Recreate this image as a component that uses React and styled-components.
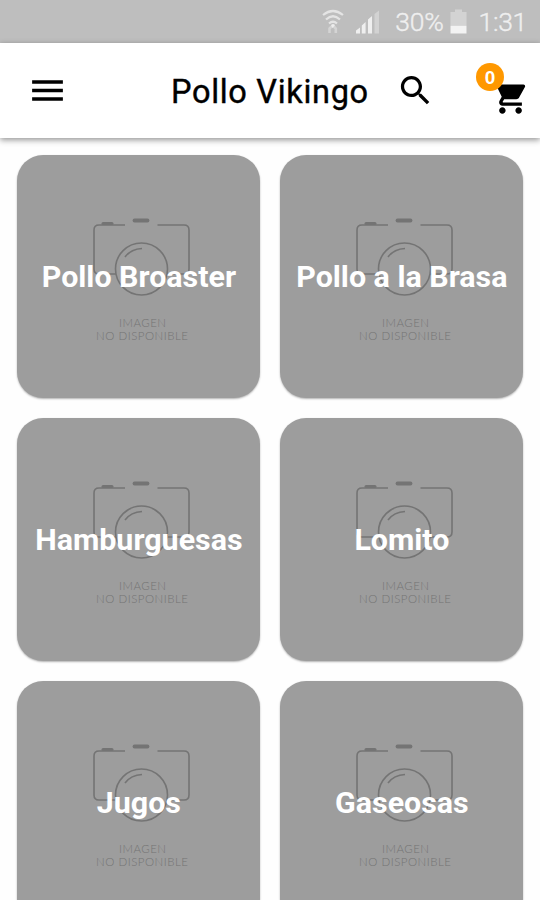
import React from "react";
import styled, { createGlobalStyle } from "styled-components";

const GlobalStyle = createGlobalStyle`
  body {
    margin: 0;
    background: #ffffff;
    font-family: Roboto, "Liberation Sans", sans-serif;
  }
`;

const Screen = styled.div`
  width: 540px;
  height: 900px;
  overflow: hidden;
  background: #fefefe;
`;

const StatusBar = styled.div`
  display: flex;
  align-items: center;
  justify-content: flex-end;
  height: 42.5px;
  padding: 2px 13px 0 0;
  box-sizing: border-box;
  background: #bebebe;
  color: #efefef;
`;

const StatusIcon = styled.svg`
  display: block;
  width: ${(props) => props.$width}px;
  height: 26px;
  margin-right: ${(props) => props.$gap}px;
`;

const StatusText = styled.span`
  font-size: 26.5px;
  font-weight: 300;
  line-height: 40px;
  -webkit-text-stroke: 0.4px #efefef;
  letter-spacing: ${(props) => props.$spacing || 0}px;
  margin-right: ${(props) => props.$gap || 0}px;
`;

const Header = styled.header`
  display: flex;
  align-items: center;
  height: 95.5px;
  padding: 0 10px 0 27px;
  box-sizing: border-box;
  background: #ffffff;
  box-shadow: 0 2px 6px rgba(0, 0, 0, 0.42);
`;

const HeaderButton = styled.button`
  display: block;
  padding: 0;
  border: 0;
  background: none;
  color: #000000;
  position: relative;
  margin: ${(props) => props.$margin || 0};

  svg {
    display: block;
    width: ${(props) => props.$size}px;
    height: ${(props) => props.$size}px;
    fill: currentColor;
  }
`;

const Title = styled.h1`
  width: 225px;
  margin: 0 0 0 103px;
  padding-top: 3px;
  font-size: 32.5px;
  font-weight: 400;
  line-height: 40px;
  letter-spacing: 0.68px;
  white-space: nowrap;
  color: #000000;
  -webkit-text-stroke: 0.4px #000000;
`;

const Badge = styled.span`
  position: absolute;
  top: -15px;
  left: -15px;
  width: 28px;
  height: 28px;
  border-radius: 50%;
  background: #ff9800;
  color: #ffffff;
  font-size: 19px;
  font-weight: 700;
  line-height: 29px;
  text-align: center;
`;

const Grid = styled.main`
  display: grid;
  grid-template-columns: 243px 243px;
  grid-auto-rows: 243px;
  gap: 20.2px 20px;
  padding: 17px 17px 0 17.4px;
`;

const Card = styled.div`
  display: grid;
  place-items: center;
  border-radius: 26px;
  background: #9d9d9d;
  box-shadow: 0 1px 2px rgba(0, 0, 0, 0.3);

  > * {
    grid-area: 1 / 1;
  }
`;

const Placeholder = styled.svg`
  width: 243px;
  height: 243px;
  fill: none;
  stroke: #747474;
  stroke-width: 1.6;

  text {
    font-family: Lato, sans-serif;
    font-weight: 300;
    font-size: 11.5px;
    fill: #747474;
    stroke: none;
    text-anchor: middle;
  }
`;

const CardTitle = styled.h2`
  margin: 0;
  padding-top: 1px;
  font-size: 30.4px;
  font-weight: 700;
  line-height: 36px;
  white-space: nowrap;
  color: #ffffff;
`;

const categories = [
  "Pollo Broaster",
  "Pollo a la Brasa",
  "Hamburguesas",
  "Lomito",
  "Jugos",
  "Gaseosas",
];

const WifiIcon = () => (
  <StatusIcon $width={22} $gap={12} viewBox="0 0 22 26">
    <g fill="none" stroke="#e4e4e4" strokeWidth="2.2">
      <path d="M1 6 Q11 -2 21 6" />
      <path d="M4 10.500 Q11 4 18 10.500" />
      <path d="M7 14.500 Q11 11 15 14.500" />
    </g>
    <circle cx="11" cy="17" r="2" fill="#ededed" />
    <path d="M7.500 24v-4.500l2-2M13.800 24v-4.500l-2-2" fill="none" stroke="#d4d4d4" strokeWidth="2.6" />
  </StatusIcon>
);

const SignalIcon = () => (
  <StatusIcon $width={23} $gap={16} viewBox="0 0 23 26">
    <path d="M0 24.500v-3l4-3v6zM5.800 24.500v-8l3.800-3.500v11.500zM12 24.500v-14l4-3.500v17.500z" fill="#efefef" />
    <path d="M18.500 24.500v-19.500l4.500-3.500v23z" fill="#d2d2d2" />
  </StatusIcon>
);

const BatteryIcon = () => (
  <StatusIcon $width={17} $gap={12} viewBox="0 0 17 26">
    <path d="M5 0.500h7v2.500h4.500v13H0.500V3H5z" fill="#d3d3d3" />
    <path d="M0.500 16.500h16v8H0.500z" fill="#f3f3f3" />
  </StatusIcon>
);

const NoImage = () => (
  <Placeholder viewBox="0 0 243 243">
    <path d="M108 70H82q-5 0-5 5v39q0 5 5 5h17" />
    <path d="M140.500 70H167q5 0 5 5v39q0 5-5 5h-17" />
    <path d="M86 68.500h9" strokeWidth="3" strokeLinecap="round" />
    <path d="M117.500 65.500h13" strokeWidth="3.800" strokeLinecap="round" />
    <circle cx="124.500" cy="114" r="26" />
    <path d="M108 102q6-8 17-8.500" />
    <text x="125.500" y="171.500" textLength="47">IMAGEN</text>
    <text x="125" y="185" textLength="92">NO DISPONIBLE</text>
  </Placeholder>
);

const App = () => {
  return (
    <Screen>
      <GlobalStyle />
      <StatusBar>
        <WifiIcon />
        <SignalIcon />
        <StatusText $gap={6} $spacing={-0.2}>30%</StatusText>
        <BatteryIcon />
        <StatusText $spacing={-0.3}>1:31</StatusText>
      </StatusBar>
      <Header>
        <HeaderButton $size={41} aria-label="Menu">
          <svg viewBox="0 0 24 24">
            <path d="M3 18h18v-2H3v2zm0-5h18v-2H3v2zm0-7v2h18V6H3z" />
          </svg>
        </HeaderButton>
        <Title>Pollo Vikingo</Title>
        <HeaderButton $size={39} aria-label="Buscar">
          <svg viewBox="0 0 24 24">
            <path d="M15.500 14h-.79l-.28-.27C15.410 12.590 16 11.110 16 9.500 16 5.910 13.090 3 9.500 3S3 5.910 3 9.500 5.910 16 9.500 16c1.610 0 3.090-.59 4.230-1.570l.27.28v.79l5 4.990L20.490 19l-4.990-5zm-6 0C7.010 14 5 11.990 5 9.500S7.010 5 9.500 5 14 7.010 14 9.500 11.990 14 9.500 14z" />
          </svg>
        </HeaderButton>
        <HeaderButton $size={39} $margin="14px 0 0 auto" aria-label="Carrito">
          <svg viewBox="0 0 24 24">
            <path d="M7 18c-1.100 0-1.990.9-1.990 2S5.900 22 7 22s2-.9 2-2-.9-2-2-2zM1 2v2h2l3.600 7.590-1.350 2.450c-.16.28-.25.61-.25.96 0 1.100.9 2 2 2h12v-2H7.420c-.14 0-.25-.11-.25-.25l.03-.12.9-1.630h7.450c.75 0 1.410-.41 1.750-1.030l3.580-6.490c.08-.14.12-.31.12-.48 0-.55-.45-1-1-1H5.210l-.94-2H1zm16 16c-1.100 0-1.990.9-1.990 2s.89 2 1.990 2 2-.9 2-2-.9-2-2-2z" />
          </svg>
          <Badge>0</Badge>
        </HeaderButton>
      </Header>
      <Grid>
        {categories.map((name) => (
          <Card key={name}>
            <NoImage />
            <CardTitle>{name}</CardTitle>
          </Card>
        ))}
      </Grid>
    </Screen>
  );
};

export default App;
